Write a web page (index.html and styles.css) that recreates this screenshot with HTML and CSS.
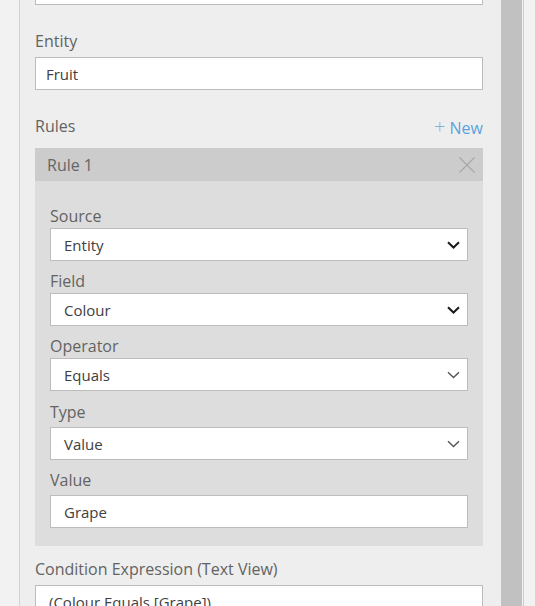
FILE: index.html
```html
<!DOCTYPE html>
<html lang="en">
<head>
    <meta charset="UTF-8">
    <meta name="viewport" content="width=device-width, initial-scale=1.0">
    <title>Condition Editor</title>
    <link rel="stylesheet" href="styles.css">
</head>
<body>
    <div class="page">
        <div class="gutter"></div>

        <main class="panel">
            <!-- previous field, scrolled mostly out of view -->
            <div class="input input-scrolled"></div>

            <div class="form-field">
                <label class="label">Entity</label>
                <div class="input">Fruit</div>
            </div>

            <div class="rules-head">
                <span class="label">Rules</span>
                <span class="new-link"><span class="plus">+</span> New</span>
            </div>

            <section class="rule">
                <div class="rule-head">
                    <span>Rule 1</span>
                    <svg class="rule-close" width="16" height="16" viewBox="0 0 16 16">
                        <path d="M0.5 0.5 L15.5 15.5 M15.5 0.5 L0.5 15.5" stroke="#a6a6a6" stroke-width="1.1" fill="none"/>
                    </svg>
                </div>
                <div class="rule-body">
                    <div class="rule-field">
                        <label class="label">Source</label>
                        <div class="select">
                            <span>Entity</span>
                            <svg class="chevron" width="13" height="8" viewBox="0 0 13 8"><path d="M1 1.2 L6.5 6.5 L12 1.2" stroke="#1a1a1a" stroke-width="2" fill="none"/></svg>
                        </div>
                    </div>
                    <div class="rule-field">
                        <label class="label">Field</label>
                        <div class="select">
                            <span>Colour</span>
                            <svg class="chevron" width="13" height="8" viewBox="0 0 13 8"><path d="M1 1.2 L6.5 6.5 L12 1.2" stroke="#1a1a1a" stroke-width="2" fill="none"/></svg>
                        </div>
                    </div>
                    <div class="rule-field">
                        <label class="label">Operator</label>
                        <div class="select">
                            <span>Equals</span>
                            <svg class="chevron" width="13" height="8" viewBox="0 0 13 8"><path d="M1 1.2 L6.5 6.5 L12 1.2" stroke="#555" stroke-width="1.4" fill="none"/></svg>
                        </div>
                    </div>
                    <div class="rule-field rule-field-loose">
                        <label class="label">Type</label>
                        <div class="select">
                            <span>Value</span>
                            <svg class="chevron" width="13" height="8" viewBox="0 0 13 8"><path d="M1 1.2 L6.5 6.5 L12 1.2" stroke="#555" stroke-width="1.4" fill="none"/></svg>
                        </div>
                    </div>
                    <div class="rule-field rule-field-loose">
                        <label class="label">Value</label>
                        <div class="input input-rule">Grape</div>
                    </div>
                </div>
            </section>

            <div class="form-field form-field-last">
                <label class="label">Condition Expression (Text View)</label>
                <div class="input input-expr">(Colour Equals [Grape])</div>
            </div>
        </main>

        <div class="scrollbar"></div>
        <div class="edge"></div>
    </div>
</body>
</html>
```

FILE: styles.css
```css
:root {
    --bg-outer: #f2f2f2;
    --bg-panel: #eeeeee;
    --rule-head: #cccccc;
    --rule-body: #dddddd;
    --border: #bcbcbc;
    --label: #636363;
    --text: #404040;
    --accent: #5aa2e0;
}

* {
    margin: 0;
    padding: 0;
    box-sizing: border-box;
}

html, body {
    height: 100%;
    overflow: hidden;
}

body {
    font-family: 'Open Sans', 'Noto Sans', sans-serif;
    background-color: var(--bg-outer);
    color: var(--text);
}

.page {
    display: grid;
    grid-template-columns: 19px 482px 21px 1fr;
    height: 100%;
}

.panel {
    background-color: var(--bg-panel);
    border-left: 1px solid #d2d2d2;
    padding: 0 18px 0 15px;
}

.scrollbar {
    background-color: #c1c1c1;
}

.edge {
    margin-left: 1px;
    border-left: 1px solid #cdcdcd;
}

.label {
    display: block;
    font-size: 16px;
    line-height: 22px;
    color: var(--label);
}

.input,
.select {
    height: 33px;
    background-color: #fff;
    border: 1px solid var(--border);
    font-size: 15px;
    line-height: 31px;
    color: var(--text);
    padding: 1px 10px 0;
}

.input-scrolled {
    margin-top: -28px;
}

.form-field {
    margin-top: 25px;
}

.form-field .label {
    margin-bottom: 5px;
}

.form-field-last {
    margin-top: 12px;
}

.input-expr {
    padding-left: 13px;
}

.rules-head {
    display: flex;
    justify-content: space-between;
    align-items: baseline;
    height: 22px;
    margin-top: 25px;
}

.new-link {
    font-size: 16px;
    line-height: 22px;
    color: var(--accent);
    position: relative;
    top: 2px;
}

.new-link .plus {
    font-size: 20px;
    line-height: 1;
    color: #86afd6;
    font-weight: 300;
}

.rule {
    margin-top: 11px;
}

.rule-head {
    display: flex;
    justify-content: space-between;
    align-items: center;
    height: 33px;
    padding: 0 8px 0 12px;
    background-color: var(--rule-head);
    font-size: 16px;
    color: #666;
}

.rule-close {
    display: block;
}

.rule-body {
    background-color: var(--rule-body);
    padding: 24px 15px 18px;
}

.rule-field + .rule-field {
    margin-top: 9px;
}

.rule-field .label {
    margin-bottom: 1px;
}

.rule-field.rule-field-loose {
    margin-top: 10px;
}

.rule-field.rule-field-loose + .rule-field-loose {
    margin-top: 9px;
}

.rule-field-loose .label {
    margin-bottom: 4px;
}

.select {
    display: flex;
    align-items: center;
    justify-content: space-between;
    padding: 1px 7px 0 13px;
}

.chevron {
    display: block;
}

.input-rule {
    padding-left: 13px;
}
```
